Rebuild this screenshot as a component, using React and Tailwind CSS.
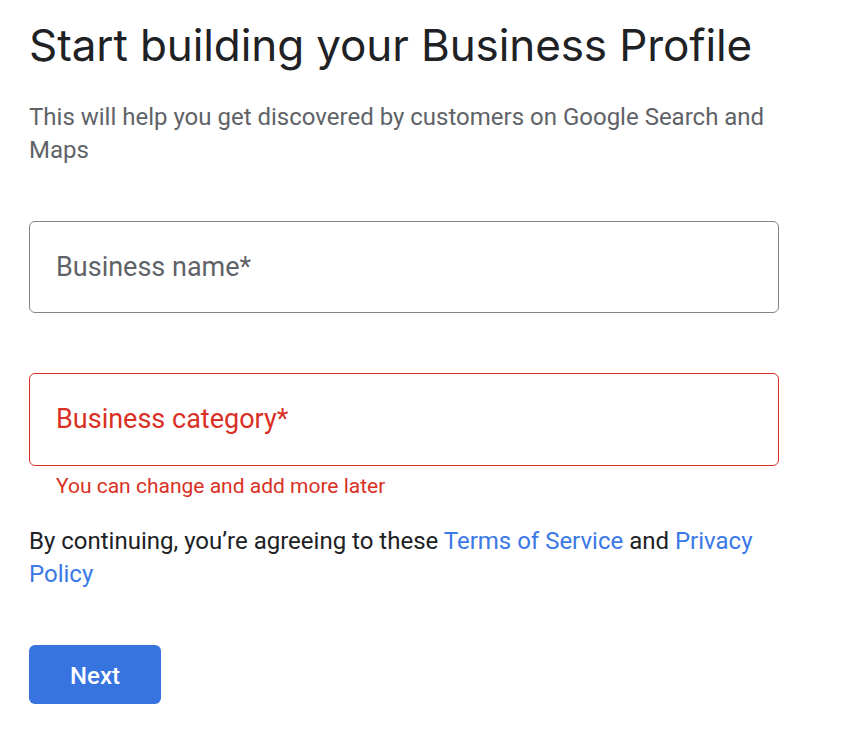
import React from "react";

export default function App() {
  return (
    <div className="min-h-screen bg-white pl-[29px] pt-[17px] font-['Roboto',sans-serif]">
      <div className="w-[750px]">
        <h1 className="whitespace-nowrap text-[44px] leading-[56px] text-[#202124] font-['Inter',sans-serif] font-normal tracking-[-0.1px]">
          Start building your Business Profile
        </h1>

        <p className="mt-[28px] text-[24px] leading-[33px] text-[#5f6368]">
          This will help you get discovered by customers on Google Search and
          Maps
        </p>

        <div className="mt-[54px] h-[92px] rounded-[6px] border border-[#80868b] flex items-center pl-[26px]">
          <span className="text-[27px] text-[#5f6368]">Business name*</span>
        </div>

        <div className="mt-[60px] h-[93px] rounded-[6px] border border-[#d93025] flex items-center pl-[26px]">
          <span className="text-[27px] text-[#d93025]">Business category*</span>
        </div>

        <p className="mt-2 pl-[27px] text-[21px] leading-[24px] text-[#d93025]">
          You can change and add more later
        </p>

        <p className="mt-[27px] text-[24px] leading-[33px] text-[#202124]">
          By continuing, you’re agreeing to these{" "}
          <a href="#" className="text-[#3b78e7]">Terms of Service</a> and{" "}
          <a href="#" className="text-[#3b78e7]">Privacy Policy</a>
        </p>

        <button className="mt-[54px] w-[132px] h-[59px] pt-[3px] rounded-[6px] bg-[#3874e0] text-white text-[24px] font-medium">
          Next
        </button>
      </div>
    </div>
  );
}
